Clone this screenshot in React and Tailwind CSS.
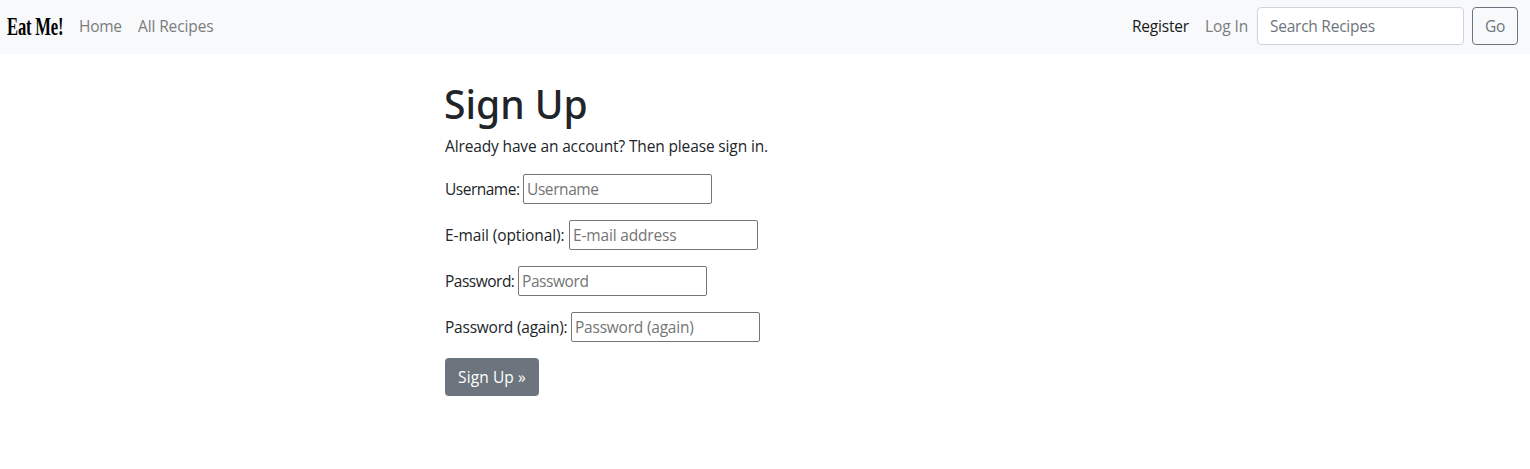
const fields = [
  { label: 'Username:', placeholder: 'Username', type: 'text', labelClass: 'w-[78px] tracking-[-0.5px]', inputClass: 'tracking-[-0.42px]' },
  { label: 'E-mail (optional):', placeholder: 'E-mail address', type: 'email', labelClass: 'w-[124px] tracking-[-0.1px]', inputClass: 'tracking-[-0.17px]' },
  { label: 'Password:', placeholder: 'Password', type: 'password', labelClass: 'w-[73px] tracking-[-0.5px]', inputClass: 'tracking-[-0.42px]' },
  { label: 'Password (again):', placeholder: 'Password (again)', type: 'password', labelClass: 'w-[126px] tracking-[-0.22px]', inputClass: 'tracking-[-0.22px]' },
];

function Navbar() {
  return (
    <nav className="flex h-[54px] items-center bg-[#f8f9fa] pr-3 pb-[2px] pl-[7px] whitespace-nowrap">
      <a href="#" className="w-[64px] pt-[2px] text-black">
        <span className="inline-block origin-left scale-x-[0.64] font-['Liberation_Serif',serif] text-[26px] leading-[38px] font-bold">Eat Me!</span>
      </a>
      <a href="#" className="ml-2 w-[59px] text-[#7b7c7d]">Home</a>
      <a href="#" className="tracking-[-0.12px] text-[#7b7c7d]">All Recipes</a>
      <div className="ml-auto flex items-center">
        <a href="#" className="w-[73px] tracking-[-0.2px] text-[#19191a]">Register</a>
        <a href="#" className="w-[52px] tracking-[-0.1px] text-[#7b7c7d]">Log In</a>
        <input
          type="search"
          placeholder="Search Recipes"
          className="h-[38px] w-[207px] rounded border border-[#ced4da] bg-white px-3 tracking-[-0.25px] placeholder:text-[#6c757d]"
        />
        <button className="ml-2 h-[38px] w-[46px] rounded border border-[#6c757d] text-[#6c757d]">Go</button>
      </div>
    </nav>
  );
}

export default function App() {
  return (
    <div className="min-h-[469px] bg-white font-['Open_Sans','Noto_Sans',sans-serif] text-[15.5px] leading-6 tracking-[-0.3px] text-[#212529]">
      <Navbar />
      <main className="ml-[445px] w-[640px] pt-[26px] whitespace-nowrap">
        <h1 className="-ml-px mb-[7px] font-['Noto_Sans','Open_Sans',sans-serif] text-[39px] leading-[48px] font-medium tracking-[0px]">Sign Up</h1>
        <p className="-mt-[1px] mb-4 tracking-[-0.14px]">Already have an account? Then please sign in.</p>
        <form className="flex flex-col items-start gap-4">
          {fields.map((f) => (
            <label key={f.label} className="flex h-[30px] items-center">
              <span className={f.labelClass}>{f.label}</span>
              <input
                type={f.type}
                placeholder={f.placeholder}
                className={`h-[30px] w-[189px] rounded-[2px] border border-[#767676] bg-white px-[3px] placeholder:text-[#757575] ${f.inputClass}`}
              />
            </label>
          ))}
          <button type="button" className="h-[38px] w-[94px] rounded bg-[#6c757d] tracking-[0.1px] text-white">Sign Up »</button>
        </form>
      </main>
    </div>
  );
}
